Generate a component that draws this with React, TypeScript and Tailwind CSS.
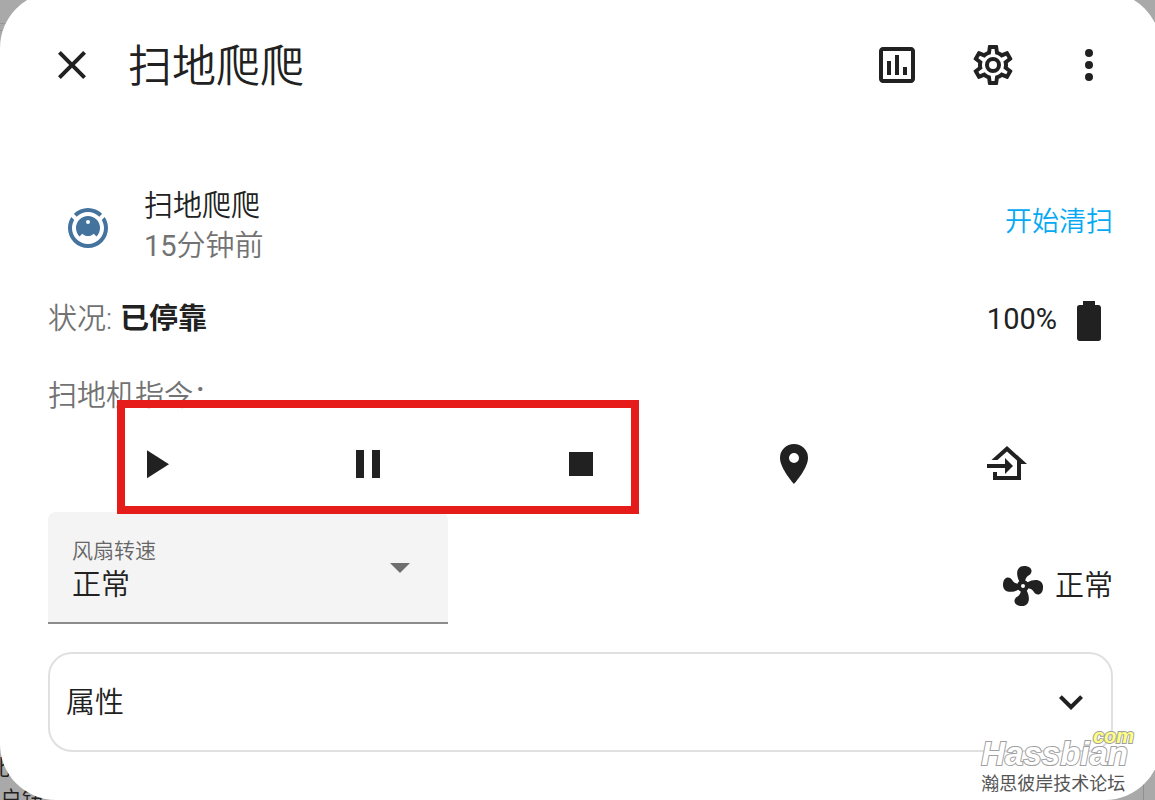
import React from 'react';

const icons = {
  close:
    'M19,6.41L17.59,5L12,10.59L6.41,5L5,6.41L10.59,12L5,17.59L6.41,19L12,13.41L17.59,19L19,17.59L13.41,12L19,6.41Z',
  chart:
    'M9 17H7V10H9V17M13 17H11V7H13V17M17 17H15V13H17V17M19 19H5V5H19V19.1M19 3H5C3.9 3 3 3.9 3 5V19C3 20.1 3.9 21 5 21H19C20.1 21 21 20.1 21 19V5C21 3.9 20.1 3 19 3Z',
  cog: 'M12,8A4,4 0 0,1 16,12A4,4 0 0,1 12,16A4,4 0 0,1 8,12A4,4 0 0,1 12,8M12,10A2,2 0 0,0 10,12A2,2 0 0,0 12,14A2,2 0 0,0 14,12A2,2 0 0,0 12,10M10,22C9.75,22 9.54,21.82 9.5,21.58L9.13,18.93C8.5,18.68 7.96,18.34 7.44,17.94L4.95,18.95C4.73,19.03 4.46,18.95 4.34,18.73L2.34,15.27C2.21,15.05 2.27,14.78 2.46,14.63L4.57,12.97L4.5,12L4.57,11L2.46,9.37C2.27,9.22 2.21,8.95 2.34,8.73L4.34,5.27C4.46,5.05 4.73,4.96 4.95,5.05L7.44,6.05C7.96,5.66 8.5,5.32 9.13,5.07L9.5,2.42C9.54,2.18 9.75,2 10,2H14C14.25,2 14.46,2.18 14.5,2.42L14.87,5.07C15.5,5.32 16.04,5.66 16.56,6.05L19.05,5.05C19.27,4.96 19.54,5.05 19.66,5.27L21.66,8.73C21.79,8.95 21.73,9.22 21.54,9.37L19.43,11L19.5,12L19.43,13L21.54,14.63C21.73,14.78 21.79,15.05 21.66,15.27L19.66,18.73C19.54,18.95 19.27,19.04 19.05,18.95L16.56,17.95C16.04,18.34 15.5,18.68 14.87,18.93L14.5,21.58C14.46,21.82 14.25,22 14,22H10M11.25,4L10.88,6.61C9.68,6.86 8.62,7.5 7.85,8.39L5.44,7.35L4.69,8.65L6.8,10.2C6.4,11.37 6.4,12.64 6.8,13.8L4.68,15.36L5.43,16.66L7.86,15.62C8.63,16.5 9.68,17.14 10.87,17.38L11.24,20H12.76L13.13,17.39C14.32,17.14 15.37,16.5 16.14,15.62L18.57,16.66L19.32,15.36L17.2,13.81C17.6,12.64 17.6,11.37 17.2,10.2L19.31,8.65L18.56,7.35L16.15,8.39C15.38,7.5 14.32,6.86 13.12,6.62L12.75,4H11.25Z',
  dots: 'M12,16A2,2 0 0,1 14,18A2,2 0 0,1 12,20A2,2 0 0,1 10,18A2,2 0 0,1 12,16M12,10A2,2 0 0,1 14,12A2,2 0 0,1 12,14A2,2 0 0,1 10,12A2,2 0 0,1 12,10M12,4A2,2 0 0,1 14,6A2,2 0 0,1 12,8A2,2 0 0,1 10,6A2,2 0 0,1 12,4Z',
  vacuum:
    'M12,2C14.65,2 17.19,3.06 19.07,4.93L17.65,6.35C16.15,4.85 14.12,4 12,4C9.88,4 7.84,4.84 6.35,6.35L4.93,4.93C6.81,3.06 9.35,2 12,2M3.66,6.5L5.11,7.94C4.39,9.17 4,10.57 4,12A8,8 0 0,0 12,20A8,8 0 0,0 20,12C20,10.57 19.61,9.17 18.88,7.94L20.34,6.5C21.42,8.12 22,10.04 22,12A10,10 0 0,1 12,22A10,10 0 0,1 2,12C2,10.04 2.58,8.12 3.66,6.5M12,6A6,6 0 0,1 18,12C18,13.59 17.37,15.12 16.24,16.24L14.83,14.83C14.08,15.58 13.06,16 12,16C10.94,16 9.92,15.58 9.17,14.83L7.76,16.24C6.63,15.12 6,13.59 6,12A6,6 0 0,1 12,6M12,8A1,1 0 0,0 11,9A1,1 0 0,0 12,10A1,1 0 0,0 13,9A1,1 0 0,0 12,8Z',
  battery:
    'M16.67,4H15V2H9V4H7.33A1.33,1.33 0 0,0 6,5.33V20.67C6,21.4 6.6,22 7.33,22H16.67A1.33,1.33 0 0,0 18,20.67V5.33C18,4.6 17.4,4 16.67,4Z',
  play: 'M8,5.14V19.14L19,12.14L8,5.14Z',
  pause: 'M14,19H18V5H14M6,19H10V5H6V19Z',
  stop: 'M18,18H6V6H18V18Z',
  marker:
    'M12,11.5A2.5,2.5 0 0,1 9.5,9A2.5,2.5 0 0,1 12,6.5A2.5,2.5 0 0,1 14.5,9A2.5,2.5 0 0,1 12,11.5M12,2A7,7 0 0,0 5,9C5,14.25 12,22 12,22C12,22 19,14.25 19,9A7,7 0 0,0 12,2Z',
  home: 'M15 13L11 9V12H2V14H11V17M5 20V16H7V18H17V10.19L12 5.69L7.21 10H4.22L12 3L22 12H19V20H5Z',
  fan: 'M12,11A1,1 0 0,0 11,12A1,1 0 0,0 12,13A1,1 0 0,0 13,12A1,1 0 0,0 12,11M12.5,2C17,2 17.11,5.57 14.75,6.75C13.76,7.24 13.32,8.29 13.13,9.22C13.61,9.42 14.03,9.73 14.35,10.13C18.05,8.13 22.03,8.92 22.03,12.5C22.03,17 18.46,17.1 17.28,14.73C16.78,13.74 15.72,13.3 14.79,13.11C14.59,13.59 14.28,14 13.88,14.34C15.87,18.03 15.08,22 11.5,22C7,22 6.91,18.42 9.27,17.24C10.25,16.75 10.69,15.71 10.89,14.79C10.4,14.59 9.97,14.27 9.65,13.87C5.96,15.85 2,15.07 2,11.5C2,7 5.56,6.89 6.74,9.26C7.24,10.25 8.29,10.68 9.22,10.87C9.41,10.39 9.73,9.97 10.14,9.65C8.15,5.96 8.94,2 12.5,2Z',
  menuDown: 'M7,10L12,15L17,10H7Z',
  chevronDown: 'M7.41,8.58L12,13.17L16.59,8.58L18,10L12,16L6,10L7.41,8.58Z',
};

const Icon: React.FC<{ name: keyof typeof icons; className?: string }> = ({ name, className = '' }) => (
  <svg viewBox="0 0 24 24" fill="currentColor" aria-hidden="true" className={`size-12 shrink-0 ${className}`}>
    <path d={icons[name]} />
  </svg>
);

const IconButton: React.FC<{ name: keyof typeof icons; label: string }> = ({ name, label }) => (
  <button type="button" aria-label={label} className="flex size-24 shrink-0 items-center justify-center">
    <Icon name={name} />
  </button>
);

const commands: { name: keyof typeof icons; label: string }[] = [
  { name: 'play', label: '开始' },
  { name: 'pause', label: '暂停' },
  { name: 'stop', label: '停止' },
  { name: 'marker', label: '定位' },
  { name: 'home', label: '返回充电座' },
];

const App: React.FC = () => {
  return (
    <div className="relative min-h-screen overflow-hidden bg-[#a9a9a9] font-[Roboto,'Noto_Sans_CJK_SC',sans-serif] font-[350] text-[#212121]">
      {/* Dimmed page behind the dialog */}
      <div aria-hidden="true">
        <div className="absolute top-[23px] left-0 h-2 w-10 border-y border-[#979797]" />
        <div className="absolute right-[11px] bottom-0 h-14 w-px bg-[#8f8f8f]" />
        <div className="absolute -bottom-4 -left-3 text-[22px] leading-8">
          <p>北</p>
          <p className="pl-3">户钮</p>
        </div>
      </div>

      <main className="relative -mt-2 -mr-[6px] rounded-[56px] bg-white pt-[25px] pb-12">
        <header className="flex items-center px-6">
          <IconButton name="close" label="关闭" />
          <h1 className="ml-2 flex-1 pt-1 text-[44px] leading-[56px]">扫地爬爬</h1>
          <IconButton name="chart" label="历史" />
          <IconButton name="cog" label="设置" />
          <IconButton name="dots" label="更多" />
        </header>

        <div className="px-12 pt-[73px]">
          <div className="flex items-center">
            <div className="flex size-20 items-center justify-center text-[#44739e]">
              <Icon name="vacuum" />
            </div>
            <div className="ml-4 flex-1 pb-1 text-[29px] leading-10">
              <p>扫地爬爬</p>
              <p className="text-[#727272]">
                <span className="font-normal">15</span>分钟前
              </p>
            </div>
            <button type="button" className="pb-3 text-[27px] leading-10 text-[#03a9f4]">
              开始清扫
            </button>
          </div>

          <div className="mt-[27px] flex items-center justify-between text-[29px] leading-10">
            <p className="flex gap-2 pb-1">
              <span className="text-[#727272]">状况:</span>
              <strong className="font-bold">已停靠</strong>
            </p>
            <div className="flex items-center gap-2">
              <p className="pb-1 font-normal">100%</p>
              <Icon name="battery" />
            </div>
          </div>

          <p className="mt-[31px] text-[29px] leading-10 text-[#727272]">扫地机指令：</p>
          <div className="relative flex justify-around">
            {commands.map((command) => (
              <IconButton key={command.name} name={command.name} label={command.label} />
            ))}
            <div className="pointer-events-none absolute -top-4 -bottom-[2px] left-[6.5%] w-[49%] border-8 border-[#e61c1b]" />
          </div>

          <div className="flex items-center justify-between">
            <div className="flex h-28 w-[400px] items-center rounded-t-lg border-b-2 border-[#8c8c8c] bg-[#f4f4f4] px-6">
              <div className="flex flex-1 flex-col pt-2">
                <label htmlFor="fan-speed" className="text-[21px] leading-7 text-[#666666]">
                  风扇转速
                </label>
                <select id="fan-speed" className="appearance-none text-[29px] leading-10 outline-none">
                  <option>正常</option>
                </select>
              </div>
              <Icon name="menuDown" className="text-[#6f6f6f]" />
            </div>
            <p className="flex items-center gap-2 pt-9 text-[29px] leading-10">
              <Icon name="fan" />
              正常
            </p>
          </div>

          <button
            type="button"
            className="mt-7 flex h-[100px] w-full items-center justify-between rounded-3xl border-2 border-[#e0e0e0] px-4 text-[29px]"
          >
            <span className="pt-1">属性</span>
            <Icon name="chevronDown" />
          </button>
        </div>
      </main>

      {/* Forum watermark */}
      <div className="pointer-events-none absolute right-[27px] bottom-1 flex flex-col">
        <p className="relative font-['Liberation_Sans',sans-serif] text-[33px] leading-9 font-bold text-white italic [-webkit-text-stroke:2px_#a0a0a0] [paint-order:stroke_fill]">
          Hassbian
          <span className="absolute -top-3 -right-[6px] text-[20px] leading-6 text-[#ffff80]">com</span>
        </p>
        <p className="text-[18px] leading-6 font-normal text-[#555555]">瀚思彼岸技术论坛</p>
      </div>
    </div>
  );
};

export default App;
